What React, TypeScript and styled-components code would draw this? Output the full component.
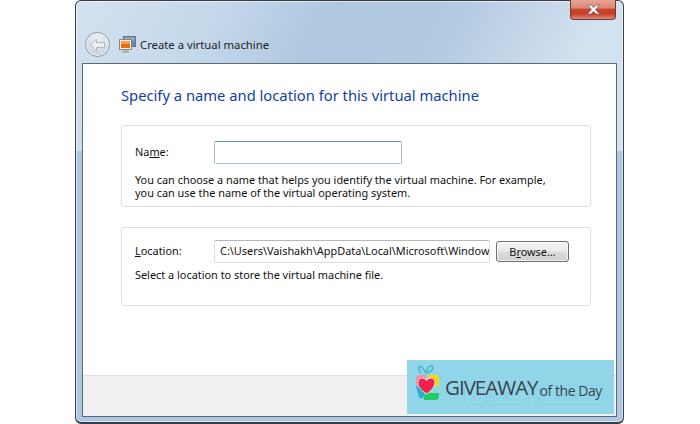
import styled, { createGlobalStyle } from "styled-components";

const GlobalStyle = createGlobalStyle`
  html, body {
    margin: 0;
    padding: 0;
    background: #fff;
  }
  body {
    font-family: "Noto Sans", "Open Sans", sans-serif;
    overflow: hidden;
  }
`;

const Page = styled.div`
  width: 700px;
  height: 424px;
  padding-left: 75px;
  box-sizing: border-box;
  overflow: hidden;
`;

const Frame = styled.div`
  position: relative;
  width: 549px;
  height: 424px;
  box-sizing: border-box;
  display: flex;
  flex-direction: column;
  padding: 0 6px 5px 6px;
  border: 1px solid #3a3d42;
  border-bottom: 2px solid #3a3d42;
  border-radius: 6px;
  background:
    linear-gradient(118deg, #d3e2f0 0%, #c5d9eb 22%, #afc7df 42%, #b3cae1 62%, #d3e2f0 85%) 0 0 / 100% 150px no-repeat,
    #adc6e2;
  box-shadow: inset 0 0 0 1px rgba(255, 255, 255, 0.55);
`;

const TitleBar = styled.div`
  height: 62px;
  flex: none;
  display: flex;
  align-items: flex-end;
  padding: 0 0 6px 3px;
  box-sizing: border-box;
`;

const TitleRow = styled.div`
  height: 25px;
  display: flex;
  align-items: center;
  gap: 4px;
`;

const BackButton = styled.div`
  width: 25px;
  height: 25px;
  margin-right: 5px;
  border-radius: 50%;
  box-sizing: border-box;
  border: 1px solid #8c9aa8;
  background: radial-gradient(circle at 50% 30%, #eef2f6 0%, #d3dbe3 60%, #bcc7d1 100%);
  box-shadow: inset 0 0 0 1px rgba(255, 255, 255, 0.75);
  display: flex;
  align-items: center;
  justify-content: center;
`;

const TitleText = styled.span`
  font-size: 11.3px;
  line-height: 20px;
  color: #1c1f24;
`;

const CloseButton = styled.div`
  position: absolute;
  top: -1px;
  right: 7px;
  width: 46px;
  height: 20px;
  box-sizing: border-box;
  border: 1px solid #6e3a32;
  border-top: none;
  border-radius: 0 0 4px 4px;
  background: linear-gradient(#e9a397 0%, #dc8777 42%, #c8432c 50%, #c63f27 72%, #d88a78 100%);
  display: flex;
  align-items: center;
  justify-content: center;
`;

const Client = styled.main`
  flex: 1;
  min-height: 0;
  display: flex;
  flex-direction: column;
  background: #fff;
  border: 1px solid #5c6a78;
`;

const Content = styled.div`
  flex: 1;
  min-height: 0;
  padding: 20px 25px 0 38px;
`;

const Heading = styled.h1`
  margin: 0 0 19px;
  font-size: 14.75px;
  line-height: 22px;
  font-weight: 400;
  color: #0f3fa8;
`;

const Group = styled.section<{ $height: number; $inset: number }>`
  height: ${(props) => props.$height}px;
  box-sizing: border-box;
  border: 1px solid #d8dfe6;
  border-radius: 3px;
  padding: ${(props) => props.$inset}px 13px 0;
  margin-bottom: 20px;
  font-size: 10.9px;
  line-height: 13px;
  color: #111;
`;

const FieldRow = styled.div`
  display: flex;
  align-items: center;
`;

const Label = styled.label`
  width: 79px;
  flex: none;
  padding-bottom: 3px;
`;

const Hotkey = styled.span`
  text-decoration: underline;
`;

const NameInput = styled.div`
  width: 188px;
  height: 23px;
  box-sizing: border-box;
  border: 1px solid #a9c1dc;
  border-top-color: #5f8bb5;
  border-radius: 2px;
  background: #fff;
`;

const PathInput = styled.div`
  width: 276px;
  height: 23px;
  box-sizing: border-box;
  border: 1px solid #dbdfe3;
  border-top-color: #b5b9bd;
  border-radius: 2px;
  padding: 0 2px 0 5px;
  line-height: 19px;
  white-space: nowrap;
  overflow: hidden;
`;

const Hint = styled.p<{ $top: number }>`
  margin: ${(props) => props.$top}px 0 0;
`;

const BrowseButton = styled.div`
  width: 73px;
  height: 21px;
  margin-left: 6px;
  box-sizing: border-box;
  border: 1px solid #707070;
  border-radius: 3px;
  background: linear-gradient(#f2f2f2 0%, #ebebeb 48%, #dcdcdc 52%, #cfcfcf 100%);
  box-shadow: inset 0 0 0 1px rgba(255, 255, 255, 0.7);
  text-align: center;
  line-height: 19px;
`;

const Footer = styled.footer`
  height: 41px;
  flex: none;
  box-sizing: border-box;
  background: #f0f0f0;
  border-top: 1px solid #dfdfdf;
  display: flex;
  justify-content: flex-end;
  align-items: flex-start;
  gap: 10px;
  padding: 9px 12px 0 0;
`;

const FooterButton = styled.div`
  width: 65px;
  height: 20px;
  box-sizing: border-box;
  border: 1px solid #adb2b5;
  border-radius: 3px;
  background: #f4f4f4;
  color: #8a8a8a;
  font-size: 10.9px;
  line-height: 18px;
  text-align: center;
`;

const Banner = styled.aside`
  position: absolute;
  left: 331px;
  bottom: 8px;
  width: 207px;
  height: 54px;
  background: rgba(137, 211, 231, 0.93);
  display: flex;
  align-items: center;
  padding-left: 8px;
  box-sizing: border-box;
`;

const LogoSlot = styled.div`
  display: flex;
  padding-bottom: 8px;
`;

const BannerBrand = styled.span`
  font-family: "Open Sans", "Noto Sans", sans-serif;
  font-size: 20.5px;
  letter-spacing: -1px;
  color: #3b4349;
  margin-left: 4px;
`;

const BannerTail = styled.span`
  font-family: "Open Sans", "Noto Sans", sans-serif;
  font-size: 14px;
  letter-spacing: -0.45px;
  color: #3b4349;
  margin-left: 2px;
  padding-top: 7px;
`;

const BackIcon = () => (
  <svg width="17" height="14" viewBox="0 0 17 14">
    <path d="M7.5 1 L1.5 7 L7.5 13 V9.4 H15.5 V4.6 H7.5 Z" fill="#eef1f4" stroke="#aab4be" strokeWidth="1" strokeLinejoin="round" />
  </svg>
);

const MachineIcon = () => (
  <svg width="17" height="17" viewBox="0 0 17 17">
    <rect x="4.5" y="0.5" width="12" height="10" fill="#5f8ab8" stroke="#6b7480" />
    <rect x="5.5" y="1.5" width="10" height="3" fill="#8fb3d6" />
    <rect x="0.5" y="3.5" width="12" height="10" fill="#f1efe9" stroke="#8a8578" />
    <rect x="2" y="5" width="9" height="7" fill="#ea6d12" />
    <rect x="2" y="5" width="9" height="3" fill="#f6a143" />
    <rect x="4.5" y="14" width="4" height="1.5" fill="#b9b5ac" />
    <rect x="3" y="15.5" width="7" height="1" fill="#97938a" />
  </svg>
);

const CloseIcon = () => (
  <svg width="15" height="11" viewBox="0 0 15 11">
    <path d="M1.5 1 H5 L7.5 3.4 L10 1 H13.5 L9.5 5.5 L13.5 10 H10 L7.5 7.6 L5 10 H1.5 L5.5 5.5 Z" fill="#f4f4f6" stroke="#6d6f78" strokeWidth="0.8" strokeLinejoin="round" />
  </svg>
);

const GiftLogo = () => (
  <svg width="26" height="38" viewBox="0 0 26 38">
    <path d="M6 9 C2 4 4 1 7 3 L11 9 M11 9 C12 3 16 0 18 3 C19 6 15 8 11 9" fill="none" stroke="#45bcd2" strokeWidth="1.6" />
    <path d="M1 15 Q1 11 5 11 H12 L8 19 L1 22 Z" fill="#f58aa6" />
    <path d="M12 11 H21 Q24 11 24 14 V24 L17 17 Z" fill="#fbd40f" />
    <path d="M1 22 L4 33 Q5 35 8 34 L10 28 L5 22 Z" fill="#1fb3cf" />
    <path d="M9 36 Q8 30 12 29 H24 V32 Q24 36 20 36 Z" fill="#22cc62" />
    <path d="M12 30 C5 26 2 22 3 17 C5 13 9 13 11.5 16.5 C14 13 19 13 20 18 C20 23 16 27 12 30 Z" fill="#f0224c" stroke="#fff" strokeWidth="0.8" />
  </svg>
);

export default function App() {
  return (
    <Page>
      <GlobalStyle />
      <Frame>
        <CloseButton>
          <CloseIcon />
        </CloseButton>
        <TitleBar>
          <TitleRow>
            <BackButton>
              <BackIcon />
            </BackButton>
            <MachineIcon />
            <TitleText>Create a virtual machine</TitleText>
          </TitleRow>
        </TitleBar>
        <Client>
          <Content>
            <Heading>Specify a name and location for this virtual machine</Heading>
            <Group $height={82} $inset={15}>
              <FieldRow>
                <Label>
                  Na<Hotkey>m</Hotkey>e:
                </Label>
                <NameInput />
              </FieldRow>
              <Hint $top={9}>
                You can choose a name that helps you identify the virtual machine. For example,
                <br />
                you can use the name of the virtual operating system.
              </Hint>
            </Group>
            <Group $height={79} $inset={12}>
              <FieldRow>
                <Label>
                  <Hotkey>L</Hotkey>ocation:
                </Label>
                <PathInput>C:\Users\Vaishakh\AppData\Local\Microsoft\Windows</PathInput>
                <BrowseButton>
                  B<Hotkey>r</Hotkey>owse...
                </BrowseButton>
              </FieldRow>
              <Hint $top={5}>Select a location to store the virtual machine file.</Hint>
            </Group>
          </Content>
          <Footer>
            <FooterButton>
              <Hotkey>N</Hotkey>ext
            </FooterButton>
            <FooterButton>Cancel</FooterButton>
          </Footer>
        </Client>
        <Banner>
          <LogoSlot>
            <GiftLogo />
          </LogoSlot>
          <BannerBrand>GIVEAWAY</BannerBrand>
          <BannerTail>of the Day</BannerTail>
        </Banner>
      </Frame>
    </Page>
  );
}
